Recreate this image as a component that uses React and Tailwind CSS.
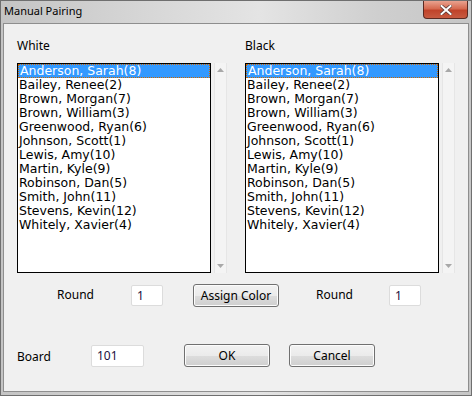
import React from "react";

const players = [
  "Anderson, Sarah(8)",
  "Bailey, Renee(2)",
  "Brown, Morgan(7)",
  "Brown, William(3)",
  "Greenwood, Ryan(6)",
  "Johnson, Scott(1)",
  "Lewis, Amy(10)",
  "Martin, Kyle(9)",
  "Robinson, Dan(5)",
  "Smith, John(11)",
  "Stevens, Kevin(12)",
  "Whitely, Xavier(4)",
];

const uiFont = { fontFamily: '"Noto Sans", "Open Sans", sans-serif' };
const listFont = { fontFamily: '"DejaVu Sans", Verdana, sans-serif' };

const ListBox = () => (
  <div className="flex">
    <div className="w-[194px] h-[210px] border border-black bg-white text-[12.5px] leading-[14px] text-black" style={listFont}>
      {players.map((p, i) => (
        <div
          key={p}
          className={
            i === 0
              ? "h-[14px] pl-[1px] bg-[#3399ff] text-white border border-dotted border-[#cc6600] leading-[12px] whitespace-nowrap"
              : "h-[14px] pl-[1px] whitespace-nowrap"
          }
        >
          {p}
        </div>
      ))}
    </div>
    <div className="ml-[3px] w-[13px] h-[210px] bg-[#f4f4f4] border-x border-[#e6e6e6] flex flex-col items-center justify-between py-[5px]">
      <svg width="7" height="4" viewBox="0 0 7 4">
        <path d="M3.5 0 L7 4 L0 4 Z" fill="#a8a8a8" />
      </svg>
      <svg width="7" height="4" viewBox="0 0 7 4">
        <path d="M0 0 L7 0 L3.5 4 Z" fill="#a8a8a8" />
      </svg>
    </div>
  </div>
);

const Button = ({ children, className = "" }) => (
  <button
    className={`h-[23px] w-[86px] rounded-[3px] border border-[#707070] text-[12px] text-black bg-[linear-gradient(#f2f2f2_0%,#ebebeb_50%,#dddddd_51%,#cfcfcf_100%)] shadow-[inset_0_0_0_1px_#fcfcfc] ${className}`}
    style={uiFont}
  >
    {children}
  </button>
);

const Field = ({ value, className = "" }) => (
  <div
    className={`h-[21px] bg-white border border-[#dcdcdc] rounded-[2px] text-[12px] leading-[19px] pl-[5px] text-[#1a1040] ${className}`}
    style={uiFont}
  >
    {value}
  </div>
);

export default function App() {
  return (
    <div
      className="w-[472px] h-[396px] flex flex-col bg-[linear-gradient(90deg,#c4c4c4_0%,#d6d6d6_30%,#e4e4e4_55%,#cfcfcf_80%,#c6c6c6_100%)] border border-[#6f6f6f]"
      style={uiFont}
    >
      {/* title bar */}
      <div className="h-[22px] flex items-start justify-between shrink-0">
        <div className="pl-[3px] pt-[2px] text-[11px] text-black leading-[16px]">Manual Pairing</div>
        <div className="mr-[3px] w-[45px] h-[18px] rounded-b-[4px] border border-t-0 border-[#5a2a22] bg-[linear-gradient(#e9a28f_0%,#d66a50_45%,#c0432a_55%,#c75a40_100%)] flex items-center justify-center">
          <svg width="12" height="10" viewBox="0 0 12 10">
            <path d="M1.5 1 L10.5 9 M10.5 1 L1.5 9" stroke="#5a3a36" strokeWidth="3.5" strokeLinecap="square" />
            <path d="M1.5 1 L10.5 9 M10.5 1 L1.5 9" stroke="#ffffff" strokeWidth="2" strokeLinecap="square" />
          </svg>
        </div>
      </div>

      {/* client area */}
      <div className="flex-1 mx-[2px] mb-[3px] border border-[#8e8e8e] bg-[#f0f0f0] text-[12px] text-black">
        <div className="flex pl-[13px] pt-[14px]">
          <div className="w-[228px] h-[15px] leading-[15px]">White</div>
          <div className="h-[15px] leading-[15px]">Black</div>
        </div>
        <div className="flex pl-[13px] pt-[10px] gap-[18px]">
          <ListBox />
          <ListBox />
        </div>

        <div className="flex items-center mt-[11px] h-[23px]">
          <div className="ml-[53px] w-[74px] leading-[15px] -mt-[2px]">Round</div>
          <Field value="1" className="w-[32px]" />
          <Button className="ml-[30px]">Assign Color</Button>
          <div className="ml-[37px] w-[73px] leading-[15px] -mt-[2px]">Round</div>
          <Field value="1" className="w-[32px]" />
        </div>

        <div className="flex items-center mt-[37px] h-[23px]">
          <div className="ml-[13px] w-[74px] leading-[15px] mt-[1px]">Board</div>
          <Field value="101" className="w-[53px] h-[22px]" />
          <Button className="ml-[40px]">OK</Button>
          <Button className="ml-[19px]">Cancel</Button>
        </div>
      </div>
    </div>
  );
}
